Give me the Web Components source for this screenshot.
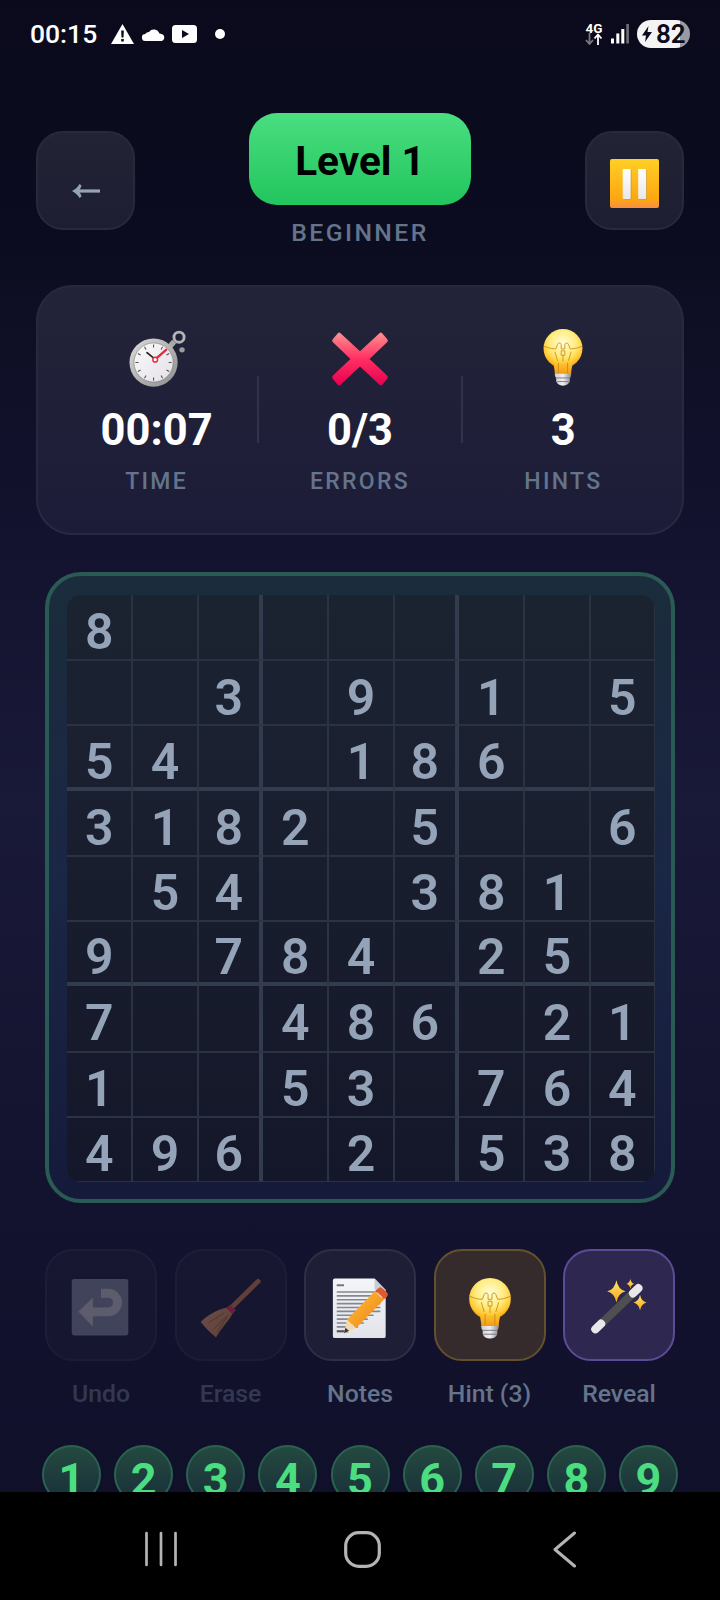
<!DOCTYPE html>
<html lang="en"><head><meta charset="utf-8"><title>Sudoku</title>
<style>html,body{margin:0;padding:0;background:#000}body{font-family:Roboto,"Liberation Sans",sans-serif}</style>
</head><body>
<sudoku-app>
  <status-bar slot="status"></status-bar>
  <game-header slot="main"></game-header>
  <stat-card slot="main">
    <stat-item label="TIME" value="00:07"><emoji-icon name="stopwatch" size="58"></emoji-icon></stat-item>
    <stat-item label="ERRORS" value="0/3"><emoji-icon name="cross" size="58"></emoji-icon></stat-item>
    <stat-item label="HINTS" value="3"><emoji-icon name="bulb" size="58"></emoji-icon></stat-item>
  </stat-card>
  <sudoku-board slot="main"></sudoku-board>
  <tool-row slot="main">
    <tool-button label="Undo" kind="off"><emoji-icon name="undo" size="62"></emoji-icon></tool-button>
    <tool-button label="Erase" kind="off"><emoji-icon name="broom" size="62"></emoji-icon></tool-button>
    <tool-button label="Notes"><emoji-icon name="memo" size="62"></emoji-icon></tool-button>
    <tool-button label="Hint (3)" kind="hint"><emoji-icon name="bulb" size="62"></emoji-icon></tool-button>
    <tool-button label="Reveal" kind="reveal"><emoji-icon name="wand" size="62"></emoji-icon></tool-button>
  </tool-row>
  <number-pad slot="main"></number-pad>
  <nav-bar slot="nav"></nav-bar>
</sudoku-app>
<script>
function def(name, html, setup){
  customElements.define(name, class extends HTMLElement{
    constructor(){super();const r=this.attachShadow({mode:'open'});r.innerHTML=html;}
    connectedCallback(){if(setup&&!this._d){this._d=1;setup(this,this.shadowRoot);}}
  });
}
const star=(x,y,a,b,id)=>`<path d="M${x} ${y-b}Q${x+a*.18} ${y-b*.18} ${x+a} ${y}Q${x+a*.18} ${y+b*.18} ${x} ${y+b}Q${x-a*.18} ${y+b*.18} ${x-a} ${y}Q${x-a*.18} ${y-b*.18} ${x} ${y-b}Z" fill="url(#${id})"/>`;
const EMOJI={
stopwatch:`<defs><linearGradient id="c" x1="0" y1="0" x2="1" y2="1"><stop offset="0" stop-color="#dcdcdc"/><stop offset="1" stop-color="#8c8c8c"/></linearGradient><linearGradient id="f" x1="0" y1="0" x2="1" y2="1"><stop offset="0" stop-color="#fafafa"/><stop offset="1" stop-color="#e4e0e8"/></linearGradient></defs>
<circle cx="56.3" cy="9" r="5.6" fill="none" stroke="#b4b4b4" stroke-width="3.2"/><circle cx="59.6" cy="23" r="3" fill="#9c9c9c"/><rect x="46" y="13" width="6" height="7" fill="#a8a8a8" transform="rotate(40 49 16)"/>
<circle cx="28.2" cy="37" r="26.6" fill="url(#c)"/><circle cx="28.2" cy="37" r="21.6" fill="url(#f)" stroke="#777" stroke-width=".6"/>
<g stroke="#555" stroke-width="1.2"><path d="M28.2 17v3.4M28.2 53.6v3.4M8.2 37h3.4M44.8 37h3.4M18.2 19.7l1.7 3M36.5 51.3l1.7 3M10.9 27l3 1.7M42.5 45.3l3 1.7M38.2 19.7l-1.7 3M19.9 51.3l-1.7 3M45.5 27l-3 1.7M13.9 45.3l-3 1.7"/></g>
<path d="M30 33.6L21 26" stroke="#222" stroke-width="1.8" stroke-linecap="round"/><path d="M30 33.6L42 23" stroke="#e8283c" stroke-width="2.6" stroke-linecap="round"/><circle cx="30" cy="33.8" r="2.6" fill="#fff" stroke="#e8283c" stroke-width="1.6"/>`,
cross:`<defs><linearGradient id="x" x1="0" y1="0" x2="0" y2="1"><stop offset="0" stop-color="#ff8f8f"/><stop offset=".5" stop-color="#ff2f62"/><stop offset="1" stop-color="#e8004f"/></linearGradient></defs>
<path d="M10.5 4.6L32 24.5 53.5 4.6a2.4 2.4 0 0 1 3 0l5.6 6.6a2.4 2.4 0 0 1 0 3.2L42.6 33l19.5 18.6a2.4 2.4 0 0 1 0 3.2l-5.6 6.6a2.4 2.4 0 0 1-3 0L32 41.5 10.5 61.400a2.4 2.4 0 0 1-3 0l-5.6-6.6a2.4 2.4 0 0 1 0-3.2L21.4 33 1.9 14.400a2.4 2.4 0 0 1 0-3.2l5.6-6.6a2.4 2.4 0 0 1 3 0z" fill="url(#x)"/>`,
bulb:`<defs><radialGradient id="g" cx=".5" cy=".36" r=".62"><stop offset="0" stop-color="#fffcd8"/><stop offset=".55" stop-color="#ffec80"/><stop offset=".85" stop-color="#ffc931"/><stop offset="1" stop-color="#f6a50f"/></radialGradient><linearGradient id="n" x1="0" y1="0" x2="0" y2="1"><stop offset="0" stop-color="#ffc83a"/><stop offset="1" stop-color="#f29a12"/></linearGradient><linearGradient id="b" x1="0" y1="0" x2="1" y2="0"><stop offset="0" stop-color="#cfcfd4"/><stop offset=".5" stop-color="#f0f0f2"/><stop offset="1" stop-color="#8c8c92"/></linearGradient></defs>
<path d="M21 36C22 42 23 45 23 50H41C41 45 42 42 43 36Z" fill="url(#n)"/><circle cx="32" cy="21.5" r="21.5" fill="url(#g)"/><path d="M21 36C24 42 25 45 25 50H39C39 45 40 42 43 36C38 40 26 40 21 36Z" fill="url(#n)"/>
<g fill="none" stroke="#c98a10" stroke-width=".9"><path d="M11 19c5 2 9 3 13 3l2-5c.5-2 3.5-2 4 0v5h4v-5c.5-2 3.5-2 4 0l2 5c4 0 8-1 13-3"/><path d="M23 25l3 10M41 25l-3 10"/><path d="M30 24h4v5h-4zM32 29v7"/><path d="M27 37v12M37 37v12"/></g>
<path d="M23 49.5H41C41 52 40.5 53 39.5 54V58C38 61 36 62.5 32 62.5S26 61 24.5 58V54C23.500 53 23 52 23 49.5Z" fill="url(#b)"/><path d="M24 54H40M25 58H39" stroke="#77777e" stroke-width="1"/>`,
undo:`<rect x="1.800" y="1" width="58.400" height="58.400" rx="2.500" fill="#858d9c"/><path d="M8.600 34.700L23.600 20.300V50.300Z" fill="#cbcbcd"/><path d="M22 35H39.500A9.600 9.600 0 0 0 39.500 15.800H32" fill="none" stroke="#cbcbcd" stroke-width="9.200"/>`,
broom:`<defs><linearGradient id="h" x1="0" y1="0" x2="1" y2="1"><stop offset="0" stop-color="#f4aa70"/><stop offset="1" stop-color="#cf8248"/></linearGradient></defs>
<path d="M60 3.500L31.500 31.500" stroke="#d98048" stroke-width="5" stroke-linecap="round"/><path d="M28 30.500C20 32 9 37 .8 45.500C6 52 11 57 16.600 61.500C21 53 30 44 33.500 37Z" fill="url(#h)"/><path d="M25 36L9 46M27 40L14 53M29 38L18 56" stroke="#a5693a" stroke-width="1" fill="none"/><path d="M27 31L31 27.500L37 33L33.500 37.500Z" fill="#f0305e"/>`,
memo:`<defs><linearGradient id="p" x1="0" y1="0" x2="0" y2="1"><stop offset="0" stop-color="#f4f5f8"/><stop offset="1" stop-color="#e2e4ea"/></linearGradient><linearGradient id="pe" x1="0" y1="0" x2="1" y2="1"><stop offset="0" stop-color="#ffc23a"/><stop offset="1" stop-color="#ef7f14"/></linearGradient></defs>
<path d="M6 .5H47L58.500 12.500V60A2 2 0 0 1 56.500 62H6A2 2 0 0 1 4 60V2.500A2 2 0 0 1 6 .5Z" fill="url(#p)"/><path d="M47 .5L58.500 12.500H49A2 2 0 0 1 47 10.500Z" fill="#c9ccd4"/>
<path d="M8 7.500H15.500" stroke="#70727c" stroke-width="2"/><g stroke="#85878f" stroke-width="1.700"><path d="M8 14.500H48M8 18.500H53M8 22.500H53M8 26.500H53M8 30.500H53M8 34.500H53M8 38.500H46M8 42.500H40M8 46.500H36M8 50.500H30"/></g><path d="M8 55H20" stroke="#50525a" stroke-width="2.200"/>
<path d="M47.500 13.500L57 22L28 51.500L18.500 43Z" fill="url(#pe)"/><path d="M47.500 13.500L51 10.500A3 3 0 0 1 55 10.500L60 15A3 3 0 0 1 60 19L57 22Z" fill="#dd5a30"/><path d="M49.500 15.300L54.500 20" stroke="#f4c2a0" stroke-width="1.500"/><path d="M18.500 43L28 51.500L15.500 57Z" fill="#f4d9ae"/><path d="M17 51.300L20.500 54.500L15.500 57Z" fill="#333"/>`,
wand:`<defs><linearGradient id="s" x1="0" y1="0" x2="0" y2="1"><stop offset="0" stop-color="#ffe86a"/><stop offset="1" stop-color="#f7a517"/></linearGradient></defs>
<path d="M8 52.500L52.500 10" stroke="#4f4f52" stroke-width="8.500"/><path d="M7.600 52.800L13.500 47.200" stroke="#e8e8ea" stroke-width="8.500" stroke-linecap="round"/><path d="M46.500 15.800L52 10.500" stroke="#e8e8ea" stroke-width="8.500" stroke-linecap="round"/>${star(29.3,13.700,9.500,11.500,'s')}${star(43.700,6,4,5,'s')}${star(53.700,25.300,6.700,8,'s')}`
};
def('emoji-icon','<style>:host{display:block;flex:none}svg{display:block;width:100%;height:100%;overflow:visible}</style><svg viewBox="0 0 64 64"></svg>',(el,r)=>{
  const n=el.getAttribute('name'),s=el.getAttribute('size')||'62';
  el.style.width=el.style.height=s+'px';
  r.querySelector('svg').innerHTML=EMOJI[n].replace(/id="(\w+)"/g,`id="${n}-$1"`).replace(/url\(#(\w+)\)/g,`url(#${n}-$1)`);
});
def('sudoku-app',`<style>
:host{display:flex;flex-direction:column;width:720px;height:1600px;overflow:hidden;font-family:Roboto,"Liberation Sans",sans-serif;background:#000}
.top{flex:1;min-height:0;overflow:hidden;background:linear-gradient(180deg,#0a0a1c 0,#0c0c20 230px,#13132f 540px,#191938 800px,#13132f 1200px,#10102b 1492px)}
main{display:flex;flex-direction:column;padding:47px 36px 0}
</style><div class="top"><slot name="status"></slot><main><slot name="main"></slot></main></div><slot name="nav"></slot>`);
def('status-bar',`<style>
:host{display:flex;align-items:center;height:66px;padding:2px 30px 0 30px;box-sizing:border-box;color:#fff;font-family:Roboto,sans-serif}
.time{font-size:26.500px;font-weight:500;line-height:30px;width:67px;margin-top:-1px}
svg{display:block;flex:none}
.l{display:flex;align-items:center;margin-left:14px}
.r{margin-left:auto;display:flex;align-items:center}
.net{width:18px;display:flex;flex-direction:column;align-items:center}
.g{font-size:13.500px;font-weight:700;line-height:10px}
.bat{width:53px;height:28px;border-radius:14px;background:linear-gradient(90deg,#f4f4f4 0 43px,#9b9b9f 43px);display:flex;align-items:center;padding-left:5px;box-sizing:border-box;color:#0b0b1e;font-size:26px;font-weight:600;margin-left:7px}
.bat span{margin-left:4px;line-height:28px}
</style>
<span class="time">00:15</span>
<div class="l">
<svg width="23" height="20" viewBox="0 0 23 20"><path d="M11.500 0L23 20H0Z" fill="#fff"/><path d="M10.200 6.500h2.600l-.3 7h-2zM10.200 15h2.600v2.600h-2.600z" fill="#0a0a1c"/></svg>
<svg style="margin-left:8px" width="23" height="13" viewBox="0 0 23 13"><path d="M3.500 13A3.500 3.500 0 0 1 3.200 6 4.500 4.500 0 0 1 7 3.900 6 6 0 0 1 17.400 5.500 3.800 3.800 0 0 1 19.500 6 3.600 3.600 0 0 1 19.500 13Z" fill="#fff"/></svg>
<svg style="margin-left:7px" width="25" height="18" viewBox="0 0 25 18"><rect width="25" height="18" rx="3.500" fill="#fff"/><path d="M10 5l7 4-7 4z" fill="#0a0a1c"/></svg>
<svg style="margin-left:18px" width="10" height="10" viewBox="0 0 10 10"><circle cx="5" cy="5" r="5" fill="#fff"/></svg>
</div>
<div class="r">
<div class="net"><span class="g">4G</span><svg width="18" height="12" viewBox="0 0 18 12"><path d="M4.500 0V10M1 7L4.500 11 8 7" fill="none" stroke="#77777e" stroke-width="1.800"/><path d="M13 12V2M9.500 5.500L13 1.500 16.500 5.500" fill="none" stroke="#fff" stroke-width="1.800"/></svg></div>
<svg style="margin-left:8px" width="19" height="20" viewBox="0 0 19 20"><rect x="0" y="14.500" width="3" height="5" fill="#fff"/><rect x="5.300" y="9.500" width="3" height="10" fill="#fff"/><rect x="10.300" y="5" width="3" height="14.500" fill="#fff"/><rect x="15.300" y="0" width="2.600" height="19.500" fill="#6f6f76"/></svg>
<div class="bat"><svg width="10" height="16" viewBox="0 0 10 16"><path d="M6.500 0L0 9.500H4L3 16 10 6H5.500Z" fill="#0b0b1e"/></svg><span>82</span></div>
</div>`);
def('game-header',`<style>
:host{display:flex;justify-content:space-between;align-items:center;height:134px}
.sq{width:99px;height:99px;box-sizing:border-box;border-radius:27px;border:2px solid #29293c;background:linear-gradient(180deg,#232336,#1e1e32);display:flex;align-items:center;justify-content:center;flex:none}
.c{display:flex;flex-direction:column;align-items:center;gap:13px}
.pill{width:222px;height:92px;box-sizing:border-box;padding-top:4px;border-radius:28px;background:linear-gradient(180deg,#4ade80,#22c55e);display:flex;align-items:center;justify-content:center;color:#000;font-size:40.500px;font-weight:700;line-height:48px}
.sub{font-size:24.750px;font-weight:500;letter-spacing:2.400px;line-height:29px;color:#64748b}
</style>
<div class="sq"><svg style="margin-top:22px" width="28" height="14" viewBox="0 0 28 14"><path d="M28 7H5" stroke="#94a3b8" stroke-width="3.200"/><path d="M0 7C3.500 5 6 3 7.500 0L9.500 1.500C9 3.500 8 5 7 7 8 9 9 10.500 9.500 12.500L7.500 14C6 11 3.500 9 0 7Z" fill="#94a3b8"/></svg></div>
<div class="c"><div class="pill">Level 1</div><div class="sub">BEGINNER</div></div>
<div class="sq"><svg style="margin-top:7px" width="49" height="49" viewBox="0 0 49 49"><defs><linearGradient id="o" x1="0" y1="0" x2="0" y2="1"><stop offset="0" stop-color="#ffcf24"/><stop offset=".85" stop-color="#fda50f"/><stop offset=".9" stop-color="#fb9a36"/><stop offset="1" stop-color="#f78f35"/></linearGradient><linearGradient id="w" x1="0" y1="0" x2="0" y2="1"><stop offset="0" stop-color="#fff"/><stop offset="1" stop-color="#e8e8e8"/></linearGradient></defs><rect width="49" height="49" rx="2" fill="url(#o)"/><rect x="13.500" y="10.500" width="8" height="30" rx="1" fill="#c88a10" opacity=".7"/><rect x="29" y="10.500" width="8" height="30" rx="1" fill="#c88a10" opacity=".7"/><rect x="12.700" y="10" width="8" height="30" rx="1" fill="url(#w)"/><rect x="28.200" y="10" width="8" height="30" rx="1" fill="url(#w)"/></svg></div>`);
def('stat-card',`<style>
:host{display:block;margin-top:38px;height:250px;box-sizing:border-box;border:2px solid #28283e;border-radius:36px;background:linear-gradient(180deg,#232338,#1c1c38);padding:42px 18px 0}
.g{display:grid;grid-template-columns:1fr 2px 1fr 2px 1fr;align-items:start}
i{display:block;width:2px;height:67px;background:#323346;margin-top:47px}
::slotted(stat-item:nth-of-type(1)){grid-column:1;grid-row:1}
::slotted(stat-item:nth-of-type(2)){grid-column:3;grid-row:1}
::slotted(stat-item:nth-of-type(3)){grid-column:5;grid-row:1}
</style><div class="g"><slot></slot><i style="grid-column:2;grid-row:1"></i><i style="grid-column:4;grid-row:1"></i></div>`);
def('stat-item',`<style>
:host{display:flex;flex-direction:column;align-items:center}
.v{color:#fff;font-size:43.500px;font-weight:700;line-height:53px;margin-top:17px}
.l{color:#64748b;font-size:23px;font-weight:500;letter-spacing:2.300px;line-height:26px;margin-top:12px}
</style><slot></slot><div class="v"></div><div class="l"></div>`,(el,r)=>{
  r.querySelector('.v').textContent=el.getAttribute('value');
  r.querySelector('.l').textContent=el.getAttribute('label');
});
def('sudoku-board',`<style>
:host{display:block;margin:37px 9px 0 8.500px;box-sizing:border-box;height:631px;border:4px solid #2a5a54;border-radius:36px;padding:19px 16px 17px 18.500px;background:linear-gradient(180deg,#1b2c3b,#1a2645 50%,#151a3a)}
.g{display:grid;grid-template-columns:repeat(9,1fr);grid-template-rows:repeat(9,1fr);width:588px;height:587px;border-radius:14px;overflow:hidden;background:linear-gradient(180deg,#1a2330,#1a2030 30%,#141729)}
.c{--t:#2a3341;box-sizing:border-box;display:flex;align-items:center;justify-content:center;padding-top:10px;border-style:solid;border-color:var(--t);border-width:1px;color:#94a3b8;font-size:50px;font-weight:600;line-height:1}
.x0{border-left-width:0}.y0{border-top-width:0}
.tr{border-right:4.500px solid #323c4e}.tb{border-bottom:4.500px solid #323c4e}
</style><div class="g"></div>`,(el,r)=>{
  const rows=['8........','..3.9.1.5','54..186..','3182.5..6','.54..381.','9.784.25.','7..486.21','1..53.764','496.2.538'];
  const g=r.querySelector('.g');
  rows.forEach((row,y)=>[...row].forEach((ch,x)=>{
    const d=document.createElement('div');d.className='c'+((x==2||x==5)?' tr':'')+((y==2||y==5)?' tb':'')+(x==0||x==3||x==6?' x0':'')+(y==0||y==3||y==6?' y0':'');
    if(ch!='.')d.textContent=ch;g.appendChild(d);
  }));
});
def('tool-row',`<style>:host{display:flex;justify-content:space-between;margin:46px 9px 0 9px}</style><slot></slot>`);
def('tool-button',`<style>
:host{display:flex;flex-direction:column;align-items:center;width:112px;gap:18px}
.b{width:112px;height:112px;box-sizing:border-box;padding-top:8px;border-radius:28px;border:2px solid #2e2e46;background:#1e1e36;display:flex;align-items:center;justify-content:center}
.l{font-size:24.750px;font-weight:500;line-height:29px;color:#64748b;white-space:nowrap}
:host([kind=off]) .b{opacity:.4}:host([kind=off]) .l{opacity:.4}
:host([kind=hint]) .b{background:#352b2d;border-color:#63502c}
:host([kind=reveal]) .b{background:#2e2850;border-color:#5a4c96}
</style><div class="b"><slot></slot></div><div class="l"></div>`,(el,r)=>{r.querySelector('.l').textContent=el.getAttribute('label');});
def('number-pad',`<style>
:host{display:flex;justify-content:space-between;margin:37px 6px 0}
div{width:59px;height:59px;box-sizing:border-box;border-radius:50%;border:2px solid #2a6250;background:linear-gradient(180deg,#24493f,#19303a);color:#4ade80;font-size:45px;font-weight:700;display:flex;align-items:center;justify-content:center;padding-top:9px;line-height:1}
</style>`,(el,r)=>{for(let i=1;i<10;i++){const d=document.createElement('div');d.textContent=i;r.appendChild(d);}});
def('nav-bar',`<style>
:host{display:flex;height:108px;flex:none;background:#000;padding:39px 0 0 145px;box-sizing:border-box;align-items:flex-start}
svg{display:block;flex:none}
</style>
<svg width="32" height="36" viewBox="0 0 32 36"><path d="M1.500 2V34M16 2V34M30.500 2V34" stroke="#b4b4b4" stroke-width="2.700" stroke-linecap="round"/></svg>
<svg style="margin-left:167px" width="37" height="37" viewBox="0 0 37 37"><rect x="1.700" y="1.700" width="33.600" height="33.600" rx="13" fill="none" stroke="#b4b4b4" stroke-width="3.200"/></svg>
<svg style="margin-left:172px" width="24" height="37" viewBox="0 0 24 37"><path d="M21.500 2L2 18.500 21.500 35" fill="none" stroke="#b4b4b4" stroke-width="3" stroke-linecap="round" stroke-linejoin="round"/></svg>`);
</script>
</body></html>
